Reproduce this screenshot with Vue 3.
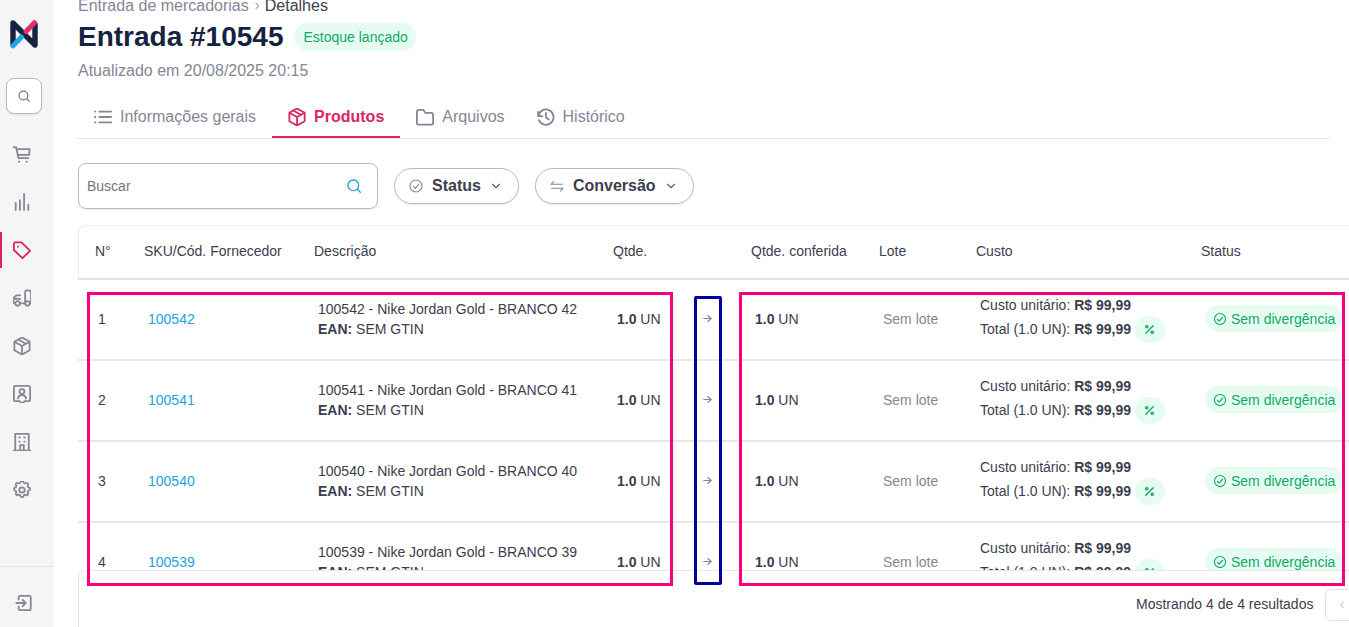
<script setup>
const sideIcons = [
  { name: 'cart', d: 'M3 4.500h2.500l2.500 12h11M6 6.500h14.500l-.5 6.500H7.200M8.500 20.500h.5M17 20.500h.5' },
  { name: 'chart', d: 'M5 21v-8M9.700 21V10M14.300 21V3M19 21v-6' },
  { name: 'tag', active: true, d: 'M3 5v7l9.500 9L21 13 11.500 3.500H4.500A1.500 1.500 0 0 0 3 5zM7.500 8v.3' },
  { name: 'truck', d: 'M10 18h5.500V5.500A2 2 0 0 1 17.500 3.500h1.500a3 3 0 0 1 3 3V18h-1M10 9H6L2.500 12v6H3.500M2.500 13H10M7 15.500a2.500 2.500 0 1 0 0 5 2.500 2.500 0 0 0 0-5zM18 15.500a2.500 2.500 0 1 0 0 5 2.500 2.500 0 0 0 0-5z' },
  { name: 'box', d: 'M12 2.500l8.500 4.700v9.600L12 21.500l-8.500-4.700V7.200zM3.500 7.200l8.500 4.800 8.500-4.800M12 12v9.500M7.800 4.800l8.500 4.800' },
  { name: 'contact', d: 'M5 3h14a2 2 0 0 1 2 2v13a2 2 0 0 1-2 2h-4l-3 2.500L9 20H5a2 2 0 0 1-2-2V5a2 2 0 0 1 2-2zM12 6.500a2.700 2.700 0 1 0 0 5.400 2.700 2.700 0 0 0 0-5.400zM7.500 17c.4-2.600 2.300-3.700 4.500-3.700s4.100 1.100 4.500 3.700' },
  { name: 'building', d: 'M2.500 21.500h19M4.500 21.500V3h15v18.500M9 7h.5M14.500 7h.5M9 11.500h.5M14.500 11.500h.5M10 21.500V15.500h4v6' },
  { name: 'gear', d: 'M10.300 3.300c.4-1.700 3-1.700 3.400 0a1.700 1.700 0 0 0 2.600 1.100c1.500-.9 3.200.8 2.300 2.300a1.700 1.700 0 0 0 1.100 2.600c1.700.4 1.700 3 0 3.400a1.700 1.700 0 0 0-1.100 2.600c.9 1.500-.8 3.200-2.300 2.300a1.700 1.700 0 0 0-2.600 1.100c-.4 1.700-3 1.700-3.400 0a1.700 1.700 0 0 0-2.600-1.100c-1.500.9-3.200-.8-2.300-2.300a1.700 1.700 0 0 0-1.100-2.600c-1.700-.4-1.700-3 0-3.400a1.700 1.700 0 0 0 1.100-2.600c-.9-1.500.8-3.200 2.300-2.300a1.700 1.700 0 0 0 2.600-1.100zM12 9a3 3 0 1 0 0 6 3 3 0 0 0 0-6z' },
]
const tabs = [
  { label: 'Informações gerais', icon: 'M8 6h13M8 12h13M8 18h13M3 6h.5M3 12h.5M3 18h.5' },
  { label: 'Produtos', active: true, icon: 'M12 2.500l8.500 4.700v9.600L12 21.500l-8.500-4.700V7.200zM3.500 7.200l8.500 4.800 8.500-4.800M12 12v9.500M7.800 4.800l8.500 4.800' },
  { label: 'Arquivos', icon: 'M3 6A2 2 0 0 1 5 4h5l2.500 3.500H19a2 2 0 0 1 2 2V19a1.500 1.500 0 0 1-1.500 1.500h-15A1.500 1.500 0 0 1 3 19z' },
  { label: 'Histórico', icon: 'M12 7.500v5l3.200 2.200M3.500 11a8.500 8.500 0 1 1 .6 4.500M3.200 6.200V11h4.800' },
]
const columns = ['N°', 'SKU/Cód. Fornecedor', 'Descrição', 'Qtde.', '', 'Qtde. conferida', 'Lote', 'Custo', 'Status']
const rows = [
  { n: 1, sku: '100542', size: 42 },
  { n: 2, sku: '100541', size: 41 },
  { n: 3, sku: '100540', size: 40 },
  { n: 4, sku: '100539', size: 39 },
]
</script>

<template>
  <div class="page">
    <aside class="sidebar">
      <svg class="logo" viewBox="0 0 28 30" width="28" height="30" aria-label="Logo">
        <path d="M3 26.500V4L25 26V4" fill="none" stroke="#14233f" stroke-width="5.400" stroke-linejoin="round" />
        <path d="M16 12.500L24.500 3.700" stroke="#e62f63" stroke-width="5" stroke-linecap="round" />
        <path d="M3 26.800L11.500 18" stroke="#22a6e6" stroke-width="5" stroke-linecap="round" />
      </svg>
      <button class="side-search" aria-label="Buscar">
        <svg viewBox="0 0 24 24" width="14" height="14" class="stroke">
          <circle cx="11" cy="11" r="7.500" /><path d="M17 17l4 4" />
        </svg>
      </button>
      <nav class="side-nav">
        <a v-for="item in sideIcons" :key="item.name" class="side-item" :class="{ active: item.active }">
          <svg viewBox="2 2 20 20" width="18" height="18" class="stroke"><path :d="item.d" /></svg>
        </a>
      </nav>
      <div class="side-bottom">
        <svg viewBox="2 2 20 20" width="18" height="18" class="stroke exit">
          <path d="M6 8V5.500A1.500 1.500 0 0 1 7.500 4H18a1.500 1.500 0 0 1 1.500 1.500v13A1.500 1.500 0 0 1 18 20H7.500A1.500 1.500 0 0 1 6 18.500V16M3.500 12H14M10.500 8.500L14 12l-3.500 3.500" />
        </svg>
      </div>
    </aside>

    <main class="main">
      <div class="crumbs">
        <span class="crumb-muted">Entrada de mercadorias</span>
        <svg viewBox="0 0 24 24" width="10" height="10" class="stroke crumb-sep"><path d="M9 5l7 7-7 7" /></svg>
        <span>Detalhes</span>
      </div>
      <div class="title-row">
        <h1>Entrada #10545</h1>
        <span class="badge">Estoque lançado</span>
      </div>
      <p class="updated">Atualizado em 20/08/2025 20:15</p>

      <div class="tabs">
        <a v-for="tab in tabs" :key="tab.label" class="tab" :class="{ active: tab.active }">
          <svg viewBox="2 2 20 20" width="18" height="18" class="stroke"><path :d="tab.icon" /></svg>
          <span>{{ tab.label }}</span>
        </a>
      </div>

      <div class="filters">
        <label class="search">
          <span class="placeholder">Buscar</span>
          <svg viewBox="0 0 24 24" width="16" height="16" class="stroke blue">
            <circle cx="11" cy="11" r="8" /><path d="M17 17l4.500 4.500" />
          </svg>
        </label>
        <button class="filter">
          <svg viewBox="0 0 24 24" width="16" height="16" class="stroke">
            <circle cx="12" cy="12" r="9" /><path d="M8 12.500l3 3 5-6" />
          </svg>
          <span>Status</span>
          <svg viewBox="0 0 24 24" width="14" height="14" class="stroke chev"><path d="M6 9l6 6 6-6" /></svg>
        </button>
        <button class="filter">
          <svg viewBox="0 0 24 24" width="16" height="16" class="stroke">
            <path d="M3 9.500h17M3 9.500l4-4M21 15.500H4M21 15.500l-4 4" />
          </svg>
          <span>Conversão</span>
          <svg viewBox="0 0 24 24" width="14" height="14" class="stroke chev"><path d="M6 9l6 6 6-6" /></svg>
        </button>
      </div>

      <section class="table">
        <div class="thead grid">
          <div v-for="(col, i) in columns" :key="i">{{ col }}</div>
        </div>
        <div class="tbody">
          <div v-for="row in rows" :key="row.n" class="trow grid">
            <div class="num">{{ row.n }}</div>
            <div><a class="link">{{ row.sku }}</a></div>
            <div class="desc">
              <div>{{ row.sku }} - Nike Jordan Gold - BRANCO {{ row.size }}</div>
              <div><b>EAN:</b> SEM GTIN</div>
            </div>
            <div><b>1.0</b> UN</div>
            <div class="arrow">
              <svg viewBox="0 0 24 24" width="9" height="9" class="stroke"><path d="M2 12h20M13 4l9 8-9 8" /></svg>
            </div>
            <div><b>1.0</b> UN</div>
            <div class="muted">Sem lote</div>
            <div class="cost">
              <div class="cost-line">Custo unitário:&nbsp;<b>R$ 99,99</b></div>
              <div class="cost-total">
                <span>Total (1.0 UN):&nbsp;<b>R$ 99,99</b></span>
                <span class="pct">
                  <svg viewBox="0 0 24 24" width="11" height="11" class="stroke green pct-icon">
                    <path d="M4 20L20 4" /><circle cx="6" cy="6" r="2.500" /><circle cx="18" cy="18" r="2.500" />
                  </svg>
                </span>
              </div>
            </div>
            <div>
              <span class="pill">
                <svg viewBox="0 0 24 24" width="14" height="14" class="stroke green">
                  <circle cx="12" cy="12" r="9.500" /><path d="M7.500 12.500l3 3 6-6.500" />
                </svg>
                Sem divergência
              </span>
            </div>
          </div>
        </div>
        <footer class="tfoot">
          <span>Mostrando 4 de 4 resultados</span>
          <button class="pager" aria-label="Anterior">
            <svg viewBox="0 0 24 24" width="12" height="12" class="stroke"><path d="M15 6l-6 6 6 6" /></svg>
          </button>
        </footer>
      </section>
    </main>

    <div class="mark pink" style="left:87px;top:292px;width:586px;height:294px"></div>
    <div class="mark navy" style="left:694px;top:296px;width:28px;height:289px"></div>
    <div class="mark pink" style="left:739px;top:292px;width:606px;height:294px"></div>
  </div>
</template>

<style>
html, body { margin: 0; overflow: hidden; background: #fff; }
</style>

<style scoped>
.page {
  position: relative;
  display: flex;
  width: 1349px;
  height: 627px;
  overflow: hidden;
  font-family: "Liberation Sans", Arial, sans-serif;
  font-size: 14px;
  color: #3d3d4e;
  background: #fff;
}
.stroke { fill: none; stroke: currentColor; stroke-width: 2; stroke-linecap: round; stroke-linejoin: round; flex: none; display: block; }
.blue { color: #1ca3dc; }
.green { color: #12a866; }

.sidebar {
  flex: none;
  width: 54px;
  height: 627px;
  background: #f5f5f5;
  display: flex;
  flex-direction: column;
  color: #868696;
}
.logo { margin: 19px 0 0 10px; }
.side-search {
  width: 36px;
  height: 36px;
  margin: 29px 0 0 6px;
  padding: 0;
  border: 1px solid #b9b9c4;
  border-radius: 8px;
  background: #fff;
  color: #6f6f80;
  display: flex;
  align-items: center;
  justify-content: center;
  box-shadow: 0 1px 2px rgba(0, 0, 0, .08);
}
.side-nav { margin-top: 16px; display: flex; flex-direction: column; }
.side-item {
  height: 48px;
  display: flex;
  align-items: center;
  padding-left: 13px;
  position: relative;
}
.side-item.active { color: #d9275f; }
.side-item.active::before {
  content: "";
  position: absolute;
  left: 0;
  top: 6px;
  bottom: 6px;
  width: 2px;
  background: #d9275f;
}
.side-bottom {
  margin-top: auto;
  height: 61px;
  box-sizing: border-box;
  border-top: 1px solid #e4e4e6;
  display: flex;
  align-items: flex-start;
  padding: 27px 0 0 15px;
}

.main { flex: 1; min-width: 0; padding: 0 19px 0 24px; margin-top: -4px; }
.crumbs { display: flex; align-items: center; gap: 3px; height: 20px; font-size: 16px; color: #3d3d4e; }
.crumb-muted { color: #868696; }
.crumb-sep { color: #5f5f6e; }
.title-row { display: flex; align-items: center; gap: 11px; margin-top: 4px; height: 34px; }
h1 { margin: 0; font-size: 28px; font-weight: 700; color: #14233f; line-height: 34px; }
.badge {
  display: inline-flex;
  align-items: center;
  height: 28px;
  padding: 0 8px 0 9px;
  border-radius: 14px;
  background: #e6fcf3;
  color: #12a866;
  font-size: 14px;
}
.updated { margin: 7px 0 0; font-size: 16px; line-height: 20px; color: #868696; }

.tabs { display: flex; margin-top: 15px; height: 42px; border-bottom: 1px solid #e6e6e8; margin-left: -1px; }
.tab {
  display: flex;
  align-items: center;
  gap: 8px;
  padding: 0 16px;
  height: 42px;
  font-size: 16px;
  color: #868696;
  box-sizing: border-box;
}
.tab:first-child { padding-left: 17px; }
.tab.active { color: #d9275f; font-weight: 700; border-bottom: 2px solid #d9275f; padding-top: 2px; }

.filters { display: flex; align-items: center; gap: 16px; margin-top: 24px; height: 46px; }
.search {
  width: 300px;
  height: 46px;
  box-sizing: border-box;
  border: 1px solid #b9b9c4;
  border-radius: 8px;
  padding: 0 15px 0 8px;
  display: flex;
  align-items: center;
  justify-content: space-between;
  box-shadow: 0 1px 2px rgba(0, 0, 0, .08);
}
.placeholder { color: #75757f; font-size: 14px; }
.filter {
  height: 36px;
  padding: 0 15px 0 13px;
  display: flex;
  align-items: center;
  gap: 8px;
  border: 1px solid #b9b9c4;
  border-radius: 18px;
  background: #fff;
  font: 700 16px "Liberation Sans", Arial, sans-serif;
  color: #3d3d4e;
  box-shadow: 0 1px 2px rgba(0, 0, 0, .08);
}
.filter .stroke { color: #868696; stroke-width: 1.600; }
.filter .chev { color: #5f5f6e; stroke-width: 2; }

.table { margin-top: 16px; width: 1290px; }
.grid {
  display: grid;
  grid-template-columns: 49px 170px 299px 94px 44px 128px 97px 225px 184px;
  align-items: center;
}
.thead {
  height: 55px;
  padding-bottom: 3px;
  box-sizing: border-box;
  border: 1px solid #ececee;
  border-bottom: 2px solid #e2e2e4;
  border-radius: 8px 0 0 0;
}
.thead > div { padding-left: 16px; }
.tbody { height: 290px; overflow: hidden; }
.trow { height: 81px; padding-bottom: 2px; box-sizing: border-box; border-bottom: 2px solid #e8e8ea; }
.trow > div { padding-left: 21px; }
.trow > .num { padding-left: 20px; }
.trow > .arrow { padding-left: 13px; color: #868696; }
.arrow .stroke { stroke-width: 3; }
.desc { line-height: 20px; }
.link { color: #1ca3dc; }
.muted { color: #868696; }
b { font-weight: 700; }
.cost-line { height: 20px; line-height: 20px; margin-bottom: 1px; white-space: nowrap; }
.cost-total { display: flex; align-items: center; gap: 4px; white-space: nowrap; }
.cost-total > span:first-child { display: flex; }
.pct {
  width: 30px;
  height: 27px;
  border-radius: 14px;
  background: #e6fcf3;
  display: flex;
  align-items: center;
  justify-content: center;
}
.pct-icon { stroke-width: 3; }
.pill {
  display: inline-flex;
  align-items: center;
  gap: 4px;
  height: 27px;
  padding: 0 8px;
  border-radius: 14px;
  background: #e6fcf3;
  color: #12a866;
  white-space: nowrap;
}
.tfoot {
  height: 68px;
  box-sizing: border-box;
  border: 1px solid #e6e6e8;
  border-radius: 8px 0 0 0;
  display: flex;
  align-items: center;
  padding: 0 0 0 1057px;
  gap: 12px;
  background: #fff;
}
.pager {
  flex: none;
  width: 40px;
  height: 32px;
  padding: 0 0 0 10px;
  border: 1px solid #e2e2e4;
  border-radius: 6px;
  background: #fff;
  color: #b5b5be;
  margin-top: 1px;
}

.mark { position: absolute; box-sizing: border-box; border-style: solid; border-width: 3px; pointer-events: none; }
.pink { border-color: #f8007c; }
.navy { border-color: #00009c; border-radius: 2px; }
</style>
